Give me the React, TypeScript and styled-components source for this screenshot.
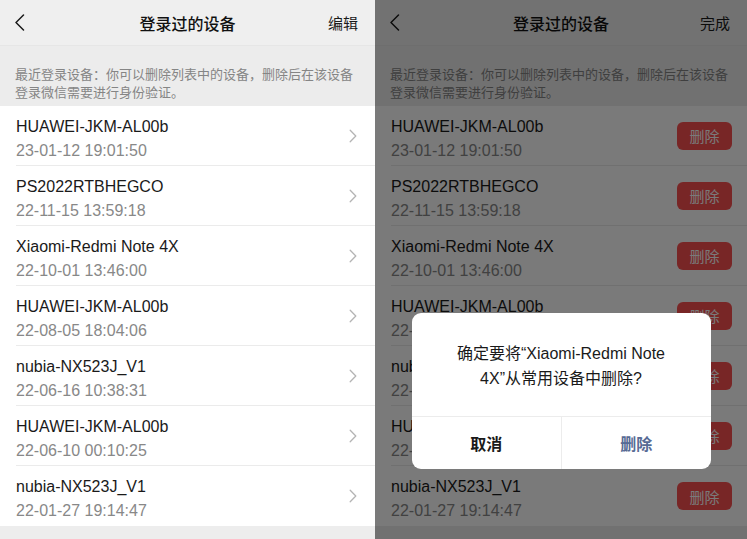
import React from "react";
import styled, { createGlobalStyle } from "styled-components";

const GlobalStyle = createGlobalStyle`
  html, body { margin: 0; padding: 0; background: #ededed; overflow: hidden; }
  body { font-family: "Liberation Sans", "Noto Sans CJK SC", sans-serif; -webkit-font-smoothing: antialiased; }
  * { box-sizing: border-box; }
`;

const Stage = styled.div`
  display: flex;
  width: 747px;
  height: 539px;
`;

const Screen = styled.div<{ $w: number }>`
  position: relative;
  width: ${(p) => p.$w}px;
  height: 539px;
  background: #ededed;
  display: flex;
  flex-direction: column;
  overflow: hidden;
`;

const NavBar = styled.div`
  height: 46px;
  flex: none;
  display: grid;
  grid-template-columns: 70px 1fr 70px;
  align-items: center;
  background: #efefef;
  border-bottom: 1px solid #e6e6e6;
`;

const BackButton = styled.div`
  display: flex;
  align-items: center;
  padding-left: 14px;
`;

const NavTitle = styled.div`
  text-align: center;
  font-family: "Noto Sans CJK SC", sans-serif;
  font-size: 16px;
  font-weight: 500;
  color: #111;
`;

const NavAction = styled.div`
  text-align: right;
  padding-right: 17px;
  font-family: "Noto Sans CJK SC", sans-serif;
  font-size: 15px;
  color: #1a1a1a;
`;

const Notice = styled.div`
  padding: 19px 16px 5px 15px;
  font-family: "Noto Sans CJK SC", sans-serif;
  font-size: 13px;
  line-height: 18px;
  color: #858585;
  background: #ececec;
`;

const List = styled.div`
  background: #fff;
  flex: none;
`;

const Row = styled.div`
  padding-left: 16px;
  display: flex;
`;

const RowBody = styled.div<{ $last: boolean; $pr: number }>`
  flex: 1;
  height: 60px;
  display: flex;
  align-items: center;
  padding-right: ${(p) => p.$pr}px;
  border-bottom: ${(p) => (p.$last ? "none" : "1px solid #ebebeb")};
`;

const RowText = styled.div`
  flex: 1;
  display: flex;
  flex-direction: column;
  gap: 2px;
  padding-top: 6px;
`;

const DeviceName = styled.div`
  font-size: 16px;
  line-height: 22px;
  color: #1a1a1a;
`;

const LoginTime = styled.div`
  font-size: 16px;
  line-height: 22px;
  color: #888;
`;

const DeleteButton = styled.div`
  width: 55px;
  height: 28px;
  border-radius: 6px;
  background: #fa5151;
  color: #fff;
  font-family: "Noto Sans CJK SC", sans-serif;
  font-size: 15px;
  display: flex;
  align-items: center;
  justify-content: center;
`;

const Mask = styled.div`
  position: absolute;
  inset: 0;
  background: rgba(0, 0, 0, 0.52);
  display: flex;
  flex-direction: column;
  align-items: center;
  padding-top: 313px;
`;

const Dialog = styled.div`
  width: 299px;
  background: #fff;
  border-radius: 9px;
  overflow: hidden;
`;

const DialogMessage = styled.div`
  padding: 28px 34px 25px;
  text-align: center;
  font-size: 16px;
  line-height: 25px;
  color: #1a1a1a;
`;

const DialogActions = styled.div`
  display: grid;
  grid-template-columns: 1fr 1fr;
  border-top: 1px solid #ececec;
`;

const DialogButton = styled.div<{ $primary?: boolean }>`
  height: 52px;
  display: flex;
  align-items: center;
  justify-content: center;
  font-family: "Noto Sans CJK SC", sans-serif;
  font-size: 16px;
  font-weight: 700;
  color: ${(p) => (p.$primary ? "#576b95" : "#1a1a1a")};
  & + & {
    border-left: 1px solid #ececec;
  }
`;

const devices = [
  { name: "HUAWEI-JKM-AL00b", time: "23-01-12 19:01:50" },
  { name: "PS2022RTBHEGCO", time: "22-11-15 13:59:18" },
  { name: "Xiaomi-Redmi Note 4X", time: "22-10-01 13:46:00" },
  { name: "HUAWEI-JKM-AL00b", time: "22-08-05 18:04:06" },
  { name: "nubia-NX523J_V1", time: "22-06-16 10:38:31" },
  { name: "HUAWEI-JKM-AL00b", time: "22-06-10 00:10:25" },
  { name: "nubia-NX523J_V1", time: "22-01-27 19:14:47" },
];

const BackIcon = () => (
  <svg width="11" height="17" viewBox="0 0 11 17">
    <path d="M9.5 1 L2 8.5 L9.5 16" fill="none" stroke="#1a1a1a" strokeWidth="1.5" strokeLinecap="round" strokeLinejoin="round" />
  </svg>
);

const Chevron = () => (
  <svg width="8" height="14" viewBox="0 0 8 14">
    <path d="M1.2 1.2 L6.8 7 L1.2 12.8" fill="none" stroke="#b5b5b5" strokeWidth="1.3" strokeLinecap="round" strokeLinejoin="round" />
  </svg>
);

const DeviceScreen = ({ editing, width }: { editing: boolean; width: number }) => (
  <Screen $w={width}>
    <NavBar>
      <BackButton>
        <BackIcon />
      </BackButton>
      <NavTitle>登录过的设备</NavTitle>
      <NavAction>{editing ? "完成" : "编辑"}</NavAction>
    </NavBar>
    <Notice>最近登录设备：你可以删除列表中的设备，删除后在该设备登录微信需要进行身份验证。</Notice>
    <List>
      {devices.map((d, i) => (
        <Row key={i}>
          <RowBody $last={i === devices.length - 1} $pr={editing ? 15 : 18}>
            <RowText>
              <DeviceName>{d.name}</DeviceName>
              <LoginTime>{d.time}</LoginTime>
            </RowText>
            {editing ? <DeleteButton>删除</DeleteButton> : <Chevron />}
          </RowBody>
        </Row>
      ))}
    </List>
    {editing && (
      <Mask>
        <Dialog>
          <DialogMessage>确定要将“Xiaomi-Redmi Note 4X”从常用设备中删除?</DialogMessage>
          <DialogActions>
            <DialogButton>取消</DialogButton>
            <DialogButton $primary>删除</DialogButton>
          </DialogActions>
        </Dialog>
      </Mask>
    )}
  </Screen>
);

export default function App() {
  return (
    <>
      <GlobalStyle />
      <Stage>
        <DeviceScreen editing={false} width={375} />
        <DeviceScreen editing width={372} />
      </Stage>
    </>
  );
}
